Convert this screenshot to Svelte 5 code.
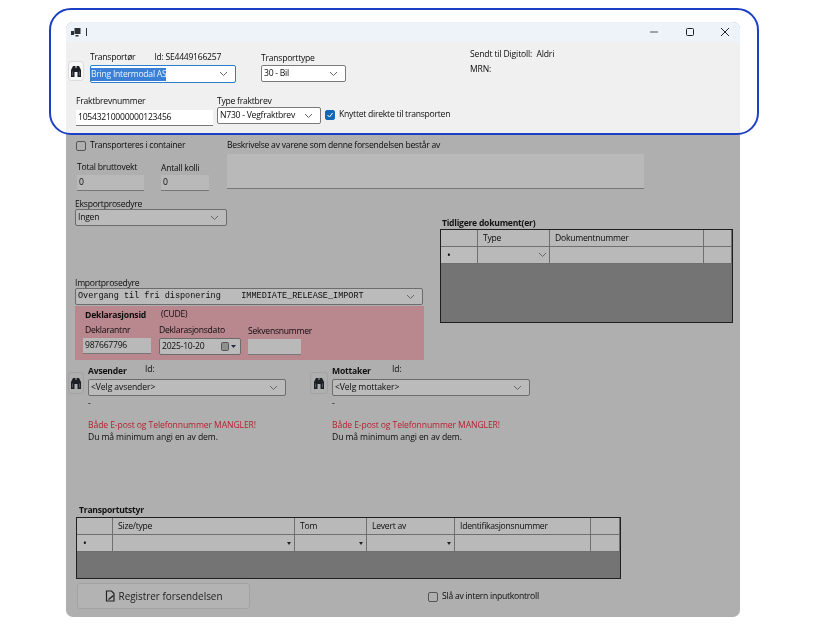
<script>
  const cols1 = ['', 'Type', 'Dokumentnummer', ''];
  const cols2 = ['', 'Size/type', 'Tom', 'Levert av', 'Identifikasjonsnummer', ''];
</script>

{#snippet chev()}
  <svg class="chev" width="9" height="6" viewBox="0 0 9 6"><path d="M1 1l3.5 3.5L8 1" fill="none" stroke="currentColor" stroke-width="1"/></svg>
{/snippet}

{#snippet combo(text, cls)}
  <div class="combo {cls}"><span class="val">{text}</span>{@render chev()}</div>
{/snippet}

{#snippet binoc()}
  <div class="binoc">
    <svg width="12" height="13" viewBox="0 0 12 13"><path d="M3 1h2.500v2h1V1H9l2 4v7H7.500V7h-3v5H1V5z" fill="#1c2024"/><path d="M2.500 6.500v4M9.500 6.500v4" stroke="#4c5662" stroke-width="1"/></svg>
  </div>
{/snippet}

{#snippet party(title, idX, text)}
  <div class="party">
    {@render binoc()}
    <div class="partybody">
      <div class="partyhead"><b>{title}</b><span class="{idX}">Id:</span></div>
      {@render combo(text, 'c198 dim')}
      <div class="dash">-</div>
      <div class="red">Både E-post og Telefonnummer MANGLER!</div>
      <div>Du må minimum angi en av dem.</div>
    </div>
  </div>
{/snippet}

<div class="stage">
  <div class="highlight"></div>
  <div class="win">
    <div class="title">
      <div class="appicon">
        <svg width="10" height="9" viewBox="0 0 10 9"><path d="M3.500 0h6v6h-6zM0 3h3v4H0zM4.500 7h3v1.500h-3z" fill="#2c3036"/></svg>
        <i class="caret"></i>
      </div>
      <div class="ctrls">
        <svg width="10" height="10" viewBox="0 0 10 10"><path d="M0 5h8" stroke="#555" stroke-width="1"/></svg>
        <svg width="10" height="10" viewBox="0 0 10 10"><rect x="1.500" y="1.500" width="7" height="7" rx="1" fill="none" stroke="#222" stroke-width="1"/></svg>
        <svg width="10" height="10" viewBox="0 0 10 10"><path d="M1 1l8 8M9 1l-8 8" stroke="#222" stroke-width="1"/></svg>
      </div>
    </div>

    <div class="top">
      <div class="toprow1">
        <div class="binocwrap">{@render binoc()}</div>
        <div class="field f145">
          <div class="lab labrow"><span>Transportør</span><span class="idtxt">Id: SE4449166257</span></div>
          <div class="combo c145 focus"><span class="sel">Bring Intermodal AS</span>{@render chev()}</div>
        </div>
        <div class="field f85">
          <div class="lab">Transporttype</div>
          {@render combo('30 - Bil', 'c85')}
        </div>
        <div class="status">
          <div>Sendt til Digitoll:&nbsp; Aldri</div>
          <div>MRN:</div>
        </div>
      </div>
      <div class="toprow2">
        <div class="field">
          <div class="lab lab1">Fraktbrevnummer</div>
          <div class="input i137">10543210000000123456</div>
        </div>
        <div class="field">
          <div class="lab">Type fraktbrev</div>
          {@render combo('N730 - Vegfraktbrev', 'c104')}
        </div>
        <div class="chk on">
          <span class="box"><svg width="8" height="8" viewBox="0 0 8 8"><path d="M1.500 4l2 2 3-4" fill="none" stroke="#fff" stroke-width="1"/></svg></span>
          <span>Knyttet direkte til transporten</span>
        </div>
      </div>
    </div>

    <div class="body">
      <div class="row-a">
        <div class="a-left">
          <div class="chk"><span class="box"></span><span>Transporteres i container</span></div>
          <div class="weights">
            <div class="field">
              <div class="lab">Total bruttovekt</div>
              <div class="input dim i67">0</div>
            </div>
            <div class="field">
              <div class="lab lab-k">Antall kolli</div>
              <div class="input dim i48">0</div>
            </div>
          </div>
        </div>
        <div class="a-right">
          <div class="lab">Beskrivelse av varene som denne forsendelsen består av</div>
          <div class="textarea"></div>
        </div>
      </div>

      <div class="row-b">
        <div class="b-left">
          <div class="lab">Eksportprosedyre</div>
          {@render combo('Ingen', 'c152 dim')}
          <div class="lab importlab">Importprosedyre</div>
          <div class="combo c348 dim"><span class="mono">Overgang til fri disponering    IMMEDIATE_RELEASE_IMPORT</span>{@render chev()}</div>
          <div class="pink">
            <div class="pinkhead"><b>Deklarasjonsid</b><span>(CUDE)</span></div>
            <div class="pinkrow">
              <div class="field">
                <div class="lab inset">Deklarantnr</div>
                <div class="input dimp i68">987667796</div>
              </div>
              <div class="field">
                <div class="lab">Deklarasjonsdato</div>
                <div class="combo c82 dimp">
                  <span class="val">2025-10-20</span>
                  <svg class="cal" width="16" height="9" viewBox="0 0 16 9"><rect x=".5" y=".5" width="7" height="8" rx="1" fill="#8f8f8f" stroke="#555"/><path d="M10 3h5l-2.500 3z" fill="#222a44"/></svg>
                </div>
              </div>
              <div class="field seq">
                <div class="lab">Sekvensnummer</div>
                <div class="input dimp i53"></div>
              </div>
            </div>
          </div>
        </div>
        <div class="b-right">
          <div class="gridtitle">Tidligere dokument(er)</div>
          <div class="grid g1">
            {#each cols1 as c}<div class="th">{c}</div>{/each}
            <div class="td dot">•</div>
            <div class="td typecell">{@render chev()}</div>
            <div class="td"></div>
            <div class="td"></div>
            <div class="fill f1"></div>
          </div>
        </div>
      </div>

      <div class="row-c">
        {@render party('Avsender', 'id1', '<Velg avsender>')}
        {@render party('Mottaker', 'id2', '<Velg mottaker>')}
      </div>

      <div class="gridtitle t2">Transportutstyr</div>
      <div class="grid g2">
        {#each cols2 as c}<div class="th">{c}</div>{/each}
        <div class="td dot">•</div>
        <div class="td dd"><i></i></div>
        <div class="td dd"><i></i></div>
        <div class="td dd"><i></i></div>
        <div class="td"></div>
        <div class="td"></div>
        <div class="fill f2"></div>
      </div>

      <div class="row-d">
        <div class="btn">
          <svg width="11" height="12" viewBox="0 0 11 12"><path d="M1.500 1h5l2.500 2.500V11h-7.500z" fill="none" stroke="#222" stroke-width="1.200"/><path d="M3.500 9.500l5-4" stroke="#222" stroke-width="1.500"/></svg>
          <span>Registrer forsendelsen</span>
        </div>
        <div class="chk"><span class="box"></span><span>Slå av intern inputkontroll</span></div>
      </div>
    </div>
  </div>
</div>

<style>
  :global(body) { margin: 0; background: #fff; }
  .stage {
    position: relative;
    width: 813px;
    height: 643px;
    padding: 22px 0 0 66px;
    box-sizing: border-box;
    font: 8.6px/11px "Open Sans", "Noto Sans", sans-serif;
    letter-spacing: -0.25px;
    color: #0c0c0c;
    overflow: hidden;
  }
  .highlight {
    position: absolute;
    left: 49px;
    top: 8px;
    width: 710px;
    height: 127px;
    box-sizing: border-box;
    border: 2px solid #1c40c4;
    border-radius: 22px;
    z-index: 2;
  }
  .win {
    width: 674px;
    height: 595px;
    border-radius: 7px;
    overflow: hidden;
    background: #afafaf;
    filter: blur(0.35px);
  }
  .title {
    height: 20px;
    background: #eef2f9;
    display: flex;
    align-items: center;
    justify-content: space-between;
    padding: 0 10px 0 5px;
  }
  .appicon { display: flex; align-items: center; gap: 5px; }
  .caret { width: 1px; height: 8px; background: #333; }
  .ctrls { display: flex; gap: 25px; }
  .top { height: 92px; background: #f0f0f0; box-sizing: border-box; padding-top: 9px; }
  .toprow1 { display: flex; height: 41px; padding-left: 2px; }
  .binocwrap { padding-top: 10px; width: 22px; }
  .field { display: flex; flex-direction: column; }
  .f145 { width: 145px; padding-top: 1px; }
  .f85 { margin-left: 26px; padding-top: 2px; }
  .lab { height: 11px; white-space: nowrap; }
  .labrow { display: flex; gap: 19px; margin-bottom: 2px; }
  .f85 .lab { margin-bottom: 1px; }
  .status { margin: -2px 0 0 124px; display: flex; flex-direction: column; gap: 4px; letter-spacing: -0.15px; }
  .toprow2 { display: flex; padding: 4px 0 0 10px; gap: 4px; }
  .lab1 { margin-bottom: 3px; }
  .toprow2 .chk { padding-top: 13px; height: 11px; }
  .chk { display: flex; align-items: center; gap: 4px; white-space: nowrap; }
  .box {
    width: 10px; height: 10px; box-sizing: border-box;
    border: 1px solid #555; border-radius: 2px;
    display: flex; align-items: center; justify-content: center;
  }
  .on .box { background: #1467b8; border-color: #1467b8; }

  .combo {
    height: 17px;
    box-sizing: border-box;
    border: 1px solid #7a7a7a;
    border-radius: 2px;
    background: #fff;
    display: flex;
    align-items: center;
    justify-content: space-between;
    padding: 0 7px 0 2px;
    white-space: nowrap;
  }
  .chev { color: #666; flex: none; }
  .focus { border-color: #2a7fd0; height: 18px; padding-left: 0; }
  .sel { background: #3a80d6; color: #ecf3fb; line-height: 13px; }
  .c145 { width: 146px; }
  .c85 { width: 85px; }
  .c104 { width: 104px; }
  .c152 { width: 152px; }
  .c348 { width: 348px; }
  .c82 { width: 82px; padding-right: 3px; }
  .c198 { width: 198px; }
  .dim, .dimp { background: #bbb; border-color: #6c6c6c; }
  .input {
    height: 16px;
    box-sizing: border-box;
    background: #fff;
    border-bottom: 1px solid #777;
    padding: 0 2px;
    display: flex;
    align-items: center;
    white-space: nowrap;
  }
  .input.dim, .input.dimp { border-width: 0 0 1px; background: #b9b9b9; }
  .i137 { width: 137px; }
  .i67 { width: 67px; }
  .i48 { width: 48px; }
  .i68 { width: 68px; }
  .i53 { width: 53px; }
  .mono {
    font: 8.5px/11px "Liberation Mono", monospace;
    letter-spacing: 0;
    white-space: pre;
  }

  .body { padding: 0 0 0 9px; }
  .row-a { display: flex; height: 59px; padding-top: 6px; }
  .a-left { width: 152px; }
  .a-left > .chk { padding-left: 1px; height: 11px; }
  .weights { display: flex; gap: 17px; padding: 11px 0 0 2px; }
  .lab-k { margin-top: 1px; margin-bottom: -1px; }
  .weights .lab { height: 13px; }
  .a-right .lab { margin-bottom: 3px; }
  .textarea {
    width: 417px; height: 35px;
    background: #b9b9b9;
    border-bottom: 1px solid #777;
    box-sizing: border-box;
  }

  .row-b { display: flex; height: 161px; }
  .b-left { width: 349px; }
  .b-left > .lab { margin-bottom: -1px; }
  .importlab { margin-top: 52px; }
  .pink {
    background: #b9878e;
    height: 54px;
    margin-top: 1px;
    box-sizing: border-box;
    padding: 3px 0 0 8px;
  }
  .pinkhead { display: flex; height: 12px; padding-left: 2px; }
  .pinkhead b { font-weight: 700; letter-spacing: -.2px; margin-top: 1px; width: 76px; }
  .pinkrow { display: flex; gap: 8px; padding-top: 4px; }
  .pinkrow .lab { margin-bottom: 2px; }
  .inset { padding-left: 2px; }
  .seq { padding-top: 1px; margin-left: -1px; }

  .b-right { margin-left: 16px; padding-top: 19px; }
  .gridtitle {
    font-weight: 700;
    height: 11px;
    line-height: 10px;
    letter-spacing: -.25px;
    color: #111;
    padding-left: 2px;
  }
  .grid {
    display: grid;
    border: 1px solid #1f1f1f;
    background: #747474;
    box-sizing: border-box;
  }
  .g1 { width: 293px; height: 94px; grid-template-columns: 37px 72px 154px 1fr; grid-template-rows: 17px 17px 1fr; }
  .g2 { width: 545px; height: 62px; margin-left: 1px; grid-template-columns: 36px 182px 72px 88px 136px 1fr; grid-template-rows: 17px 17px 1fr; }
  .th, .td {
    background: #b9b9b9;
    border-right: 1px solid #6f6f6f;
    border-bottom: 1px solid #6f6f6f;
    padding-left: 5px;
    display: flex;
    align-items: center;
    box-sizing: border-box;
  }
  .fill { grid-column: 1 / -1; background: #747474; }
  .dot { padding-left: 6px; font-size: 10px; background: #bcbcbc; }
  .typecell { justify-content: flex-end; padding-right: 2px; }
  .dd { justify-content: flex-end; padding-right: 3px; }
  .dd i {
    width: 0; height: 0;
    border-left: 2.500px solid transparent;
    border-right: 2.500px solid transparent;
    border-top: 3px solid #222;
  }

  .row-c { display: flex; height: 143px; margin-left: -7px; box-sizing: border-box; padding-top: 4px; }
  .party { display: flex; width: 242px; gap: 4px; letter-spacing: -0.1px; }
  .binoc {
    width: 16px; height: 22px;
    margin-top: 8px;
    box-sizing: border-box;
    border: 1px solid #a3a3a3;
    border-radius: 3px;
    display: flex; align-items: center; justify-content: center;
    flex: none;
  }
  .party:last-child .binoc { width: 18px; }
  .binocwrap .binoc { margin-top: 0; border-color: #ddd; background: #f7f7f7; width: 16px; height: 20px; }
  .partyhead { display: flex; height: 15px; align-items: flex-start; }
  .partyhead b { font-weight: 700; width: 57px; color: #111; letter-spacing: -.2px; margin-top: 2px; }
  .partybody > div:last-child { margin-top: 1px; }
  .dash { height: 11px; margin: 2px 0 11px; }
  .red { color: #b5202c; }
  .id2 { margin-left: 3px; }
  .t2 { padding-left: 4px; margin-top: 2px; height: 12px; }
  .row-d { display: flex; align-items: center; padding: 4px 0 0 2px; }
  .btn {
    width: 173px; height: 26px;
    box-sizing: border-box;
    border: 1px solid #a2a2a2;
    border-radius: 3px;
    background: #b3b3b3;
    display: flex; align-items: center; justify-content: center; gap: 3px;
    font: 9.9px/12px "Open Sans", sans-serif;
    letter-spacing: 0;
    color: #222;
  }
  .row-d .chk { margin-left: 178px; margin-top: 1px; }
</style>
